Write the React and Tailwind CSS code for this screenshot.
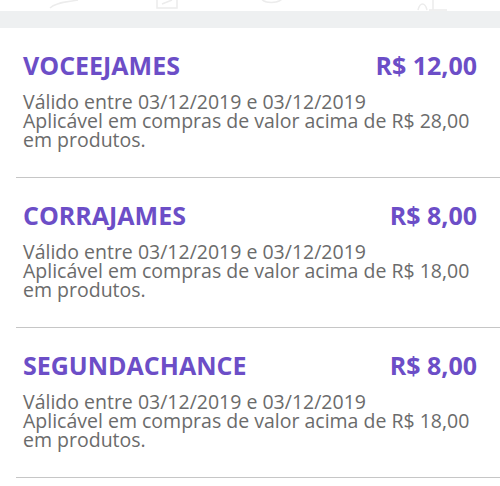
import React from 'react';

const coupons = [
  { code: 'VOCEEJAMES', value: 'R$ 12,00', min: 'R$ 28,00' },
  { code: 'CORRAJAMES', value: 'R$ 8,00', min: 'R$ 18,00' },
  { code: 'SEGUNDACHANCE', value: 'R$ 8,00', min: 'R$ 18,00' },
];

// faint remnants of the nav icons cut off at the top
function TopIcons() {
  return (
    <div className="relative h-[11px] bg-white overflow-hidden">
      <svg className="absolute left-[48px] -top-[6px]" width="32" height="16" fill="none" stroke="#ececec" strokeWidth="1.5">
        <path d="M2 14 C8 8 20 8 30 6" />
      </svg>
      <svg className="absolute left-[153px] -top-[6px]" width="28" height="17" fill="none" stroke="#ececec" strokeWidth="1.5">
        <path d="M4 2 V14 H24 V2" />
        <path d="M9 10 L19 6" />
      </svg>
      <svg className="absolute left-[258px] -top-[8px]" width="28" height="14" fill="none" stroke="#ececec" strokeWidth="1.5">
        <path d="M3 6 C6 12 20 12 25 6" />
      </svg>
      <svg className="absolute left-[415px] -top-[4px]" width="34" height="15" fill="none" stroke="#ececec" strokeWidth="1.5">
        <path d="M3 14 C5 6 10 6 12 14 M18 2 V14 M14 14 H32" />
      </svg>
    </div>
  );
}

export default function App() {
  return (
    <div className="w-[500px] h-[486px] overflow-hidden bg-white" style={{ fontFamily: '"Open Sans", "Noto Sans", sans-serif' }}>
      <TopIcons />
      <div className="h-[17px] bg-[#eef0f1]" />
      {coupons.map((c) => (
        <div key={c.code} className="ml-4 border-b border-[#c6c6c6] pl-[7px] pr-[23px] pt-[22px] pb-[28px]">
          <div className="flex justify-between items-center text-[25px] leading-[30px] font-bold text-[#6c4ec7]">
            <span>{c.code}</span>
            <span>{c.value}</span>
          </div>
          <div className="mt-[12px] text-[19.5px] leading-[19px] text-[#6b6b6b] whitespace-nowrap">
            <p>Válido entre 03/12/2019 e 03/12/2019</p>
            <p>Aplicável em compras de valor acima de {c.min}</p>
            <p>em produtos.</p>
          </div>
        </div>
      ))}
    </div>
  );
}
